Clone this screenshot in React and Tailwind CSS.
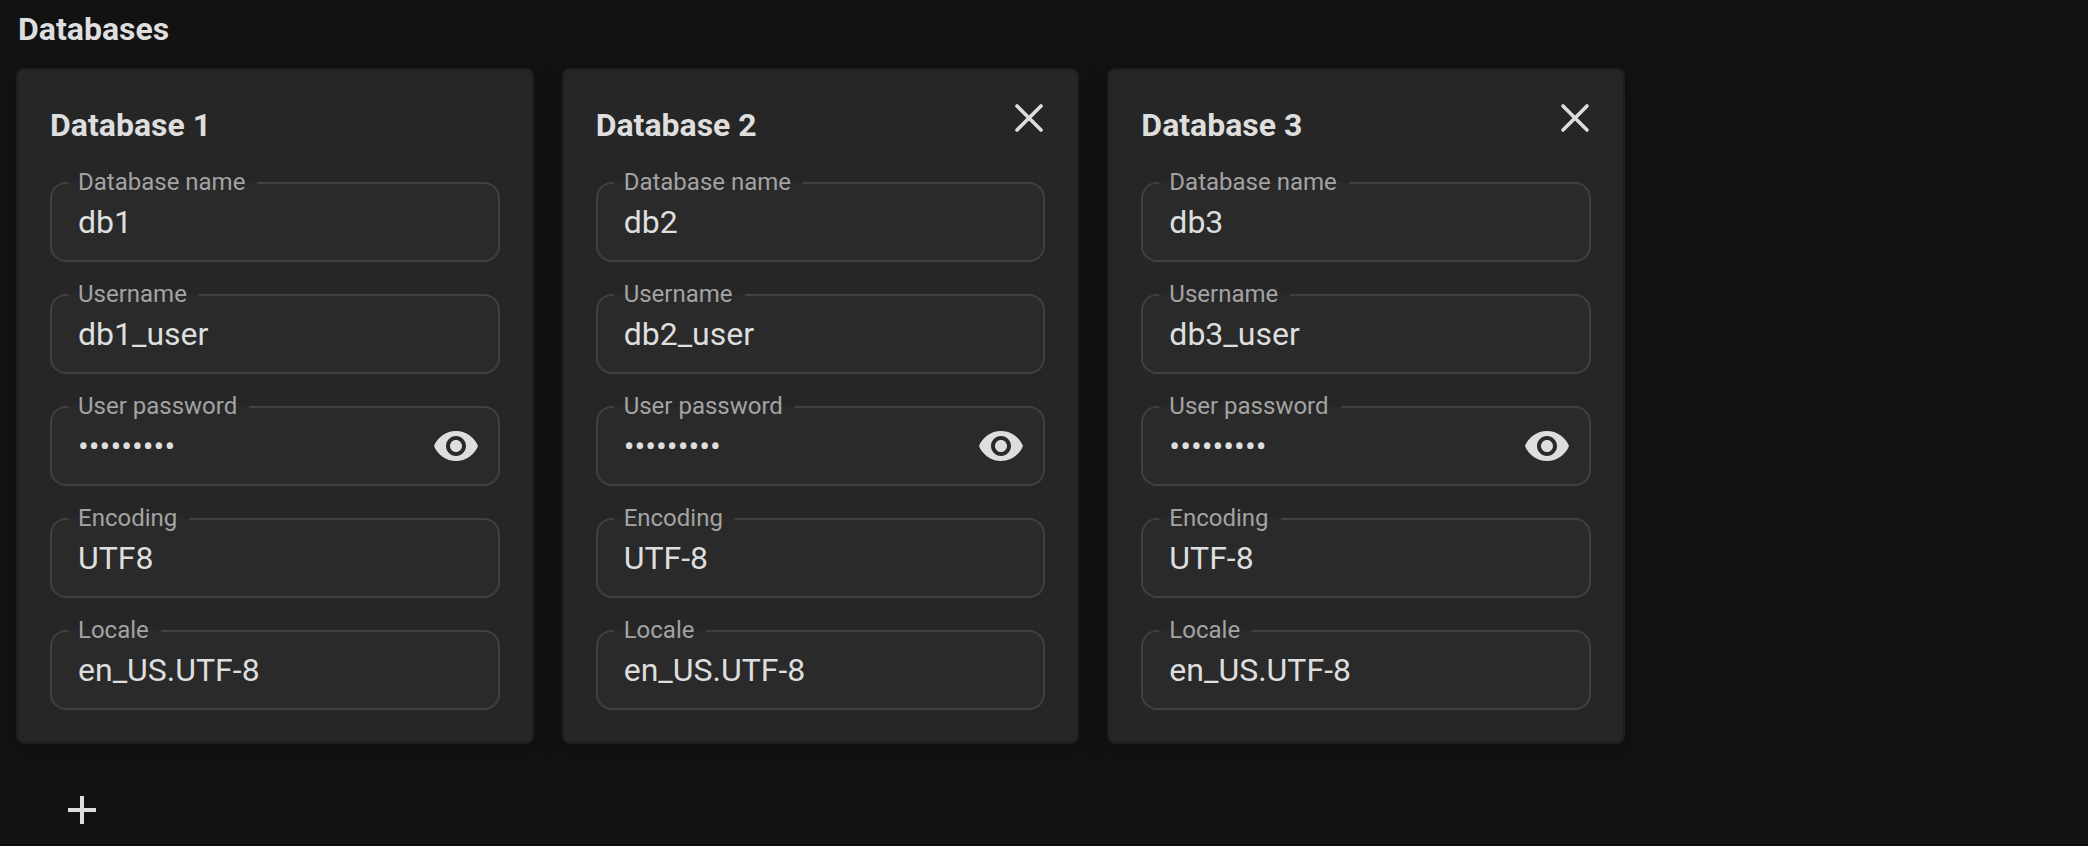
import React, { useState } from "react";
import { MdAdd, MdVisibility, MdVisibilityOff } from "react-icons/md";

const initialDatabases = [
  { id: 1, name: "db1", user: "db1_user", password: "password1", encoding: "UTF8", locale: "en_US.UTF-8" },
  { id: 2, name: "db2", user: "db2_user", password: "password2", encoding: "UTF-8", locale: "en_US.UTF-8" },
  { id: 3, name: "db3", user: "db3_user", password: "password3", encoding: "UTF-8", locale: "en_US.UTF-8" },
];

const fields = [
  { key: "name", label: "Database name" },
  { key: "user", label: "Username" },
  { key: "password", label: "User password", secret: true },
  { key: "encoding", label: "Encoding" },
  { key: "locale", label: "Locale" },
];

const CloseIcon = () => (
  <svg viewBox="0 0 48 48" className="size-12" fill="none" stroke="currentColor" strokeWidth="3.6" strokeLinecap="round">
    <path d="M12 12 36 36M36 12 12 36" />
  </svg>
);

const OutlinedField = ({ id, label, value, secret, onChange }) => {
  const [visible, setVisible] = useState(false);

  return (
    <fieldset className="min-w-0 h-20 px-4 rounded-2xl border-2 border-[#404040] bg-[#2a2a2a]">
      {/* Zero height keeps the label centered on the border */}
      <legend className="flex items-center h-0 pl-[10px] pr-3">
        <label htmlFor={id} className="pb-[2px] text-2xl leading-7 text-[#a3a3a3]">
          {label}
        </label>
      </legend>
      <div className="flex items-center pt-[14px] pl-[10px] pr-[2px]">
        <input
          id={id}
          type={secret && !visible ? "password" : "text"}
          value={value}
          onChange={(e) => onChange(e.target.value)}
          className="flex-1 min-w-0 h-12 bg-transparent text-[32px] text-[#dedede] outline-none"
        />
        {secret && (
          <button type="button" aria-label="Toggle password" onClick={() => setVisible(!visible)}>
            {visible ? (
              <MdVisibilityOff className="size-12 text-[#dedede]" />
            ) : (
              <MdVisibility className="size-12 text-[#dedede]" />
            )}
          </button>
        )}
      </div>
    </fieldset>
  );
};

const DatabaseCard = ({ index, database, onChange, onRemove }) => {
  return (
    <section className="p-8 rounded-lg border-2 border-[#1e1e1e] bg-[#262626] shadow-[0_8px_24px_rgba(0,0,0,0.2)]">
      <div className="flex items-start justify-between h-20">
        <h2 className="pt-[3px] text-[32px] leading-10 font-bold">Database {index}</h2>
        {index > 1 && (
          <button type="button" aria-label="Remove database" onClick={onRemove} className="-mt-2 -mr-2">
            <CloseIcon />
          </button>
        )}
      </div>
      <div className="flex flex-col gap-8">
        {fields.map((field) => (
          <OutlinedField
            key={field.key}
            id={`${field.key}-${database.id}`}
            label={field.label}
            secret={field.secret}
            value={database[field.key]}
            onChange={(value) => onChange({ ...database, [field.key]: value })}
          />
        ))}
      </div>
    </section>
  );
};

const App = () => {
  const [databases, setDatabases] = useState(initialDatabases);

  const updateDatabase = (next) => {
    setDatabases(databases.map((db) => (db.id === next.id ? next : db)));
  };

  const removeDatabase = (id) => {
    setDatabases(databases.filter((db) => db.id !== id));
  };

  const addDatabase = () => {
    const id = Math.max(0, ...databases.map((db) => db.id)) + 1;
    setDatabases([
      ...databases,
      { id, name: `db${id}`, user: `db${id}_user`, password: "", encoding: "UTF-8", locale: "en_US.UTF-8" },
    ]);
  };

  return (
    <main className="min-h-screen px-4 pt-2 bg-[#121212] border-b-2 border-[#0c080d] text-[#dedede] font-['Roboto',sans-serif]">
      <h1 className="pt-px pl-[2px] text-[32px] leading-10 font-bold">Databases</h1>

      {/* Database cards */}
      <div className="grid grid-cols-3 gap-7 max-w-[1609px] mt-[19px]">
        {databases.map((db, i) => (
          <DatabaseCard
            key={db.id}
            index={i + 1}
            database={db}
            onChange={updateDatabase}
            onRemove={() => removeDatabase(db.id)}
          />
        ))}
      </div>

      <button type="button" aria-label="Add database" onClick={addDatabase} className="block mt-8 p-[10px] ml-8">
        <MdAdd className="size-12" />
      </button>
    </main>
  );
};

export default App;
